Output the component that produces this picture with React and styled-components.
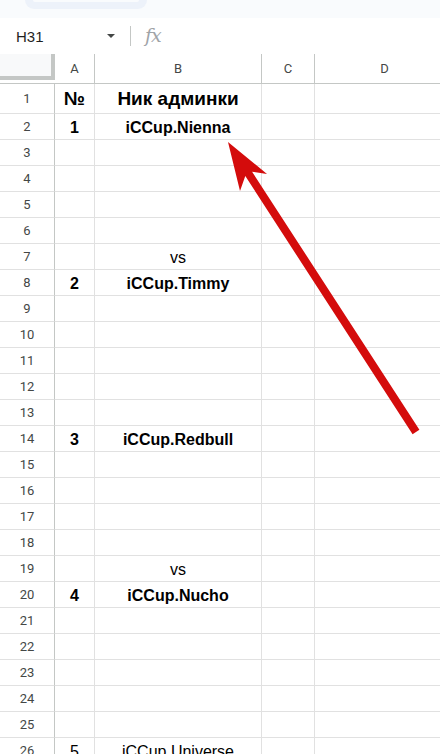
import React from "react";
import styled, { createGlobalStyle } from "styled-components";

const GlobalStyle = createGlobalStyle`
  html, body {
    margin: 0;
    padding: 0;
    background: #ffffff;
    overflow: hidden;
  }
  body {
    font-family: "Liberation Sans", Arial, sans-serif;
  }
`;

const COLS = [55, 40, 167, 53, 140];
const LETTERS = ["A", "B", "C", "D"];

const rows = [
  { a: "№", b: "Ник админки", head: true },
  { a: "1", b: "iCCup.Nienna", bold: true },
  {},
  {},
  {},
  {},
  { b: "vs" },
  { a: "2", b: "iCCup.Timmy", bold: true },
  {},
  {},
  {},
  {},
  {},
  { a: "3", b: "iCCup.Redbull", bold: true },
  {},
  {},
  {},
  {},
  { b: "vs" },
  { a: "4", b: "iCCup.Nucho", bold: true },
  {},
  {},
  {},
  {},
  {},
  { a: "5", b: "iCCup.Universe" },
];

const Page = styled.div`
  position: relative;
  width: 440px;
  height: 754px;
  overflow: hidden;
  background: #ffffff;
`;

const TopStrip = styled.div`
  height: 18px;
  background: #f9fbfd;
  display: flex;
  padding-left: 25px;
`;

const SearchPill = styled.div`
  width: 122px;
  height: 9px;
  background: #edf2fa;
  border-radius: 0 0 10px 10px;
  display: flex;
  justify-content: center;
`;

const SearchInner = styled.div`
  width: 106px;
  height: 2px;
  background: #f9fbfd;
  border-radius: 0 0 6px 6px;
`;

const FormulaBar = styled.div`
  height: 36px;
  display: flex;
  align-items: center;
  background: #ffffff;
`;

const NameBox = styled.div`
  width: 91px;
  padding-left: 16px;
  font-family: "Liberation Sans", Arial, sans-serif;
  font-size: 15px;
  color: #1f1f1f;
`;

const Caret = styled.div`
  width: 0;
  height: 0;
  border-left: 4px solid transparent;
  border-right: 4px solid transparent;
  border-top: 4px solid #444746;
  margin-right: 15px;
`;

const Divider = styled.div`
  width: 1px;
  height: 20px;
  background: #c4c7c5;
  margin-right: 14px;
`;

const Fx = styled.div`
  font-family: "DejaVu Serif", "Liberation Serif", serif;
  font-style: italic;
  font-size: 19px;
  color: #a0a4a8;
  letter-spacing: -1px;
  margin-top: -2px;
`;

const Grid = styled.div`
  display: grid;
  grid-template-columns: ${COLS.map((c) => c + "px").join(" ")};
  grid-auto-rows: 26px;
  grid-template-rows: 30px 30px;
`;

const Corner = styled.div`
  display: flex;
  flex-direction: column;
  border-bottom: 1px solid #c4c7c5;
`;

const CornerFill = styled.div`
  height: 22px;
  background: #f8f9fa;
  border-right: 4px solid #c4c7c5;
  border-bottom: 4px solid #c4c7c5;
`;

const ColHead = styled.div`
  display: flex;
  align-items: center;
  justify-content: center;
  border-right: 1px solid #c4c7c5;
  border-bottom: 1px solid #c4c7c5;
  font-family: Roboto, "Liberation Sans", sans-serif;
  font-size: 13px;
  color: #444746;
`;

const RowHead = styled.div`
  display: flex;
  align-items: center;
  justify-content: center;
  border-right: 1px solid #c4c7c5;
  border-bottom: 1px solid #e1e1e1;
  font-family: Roboto, "Liberation Sans", sans-serif;
  font-size: 13px;
  color: #444746;
`;

const Cell = styled.div`
  display: flex;
  align-items: flex-end;
  justify-content: center;
  padding-bottom: ${(p) => (p.$head ? "3px" : "2px")};
  box-sizing: border-box;
  border-right: 1px solid #e1e1e1;
  border-bottom: 1px solid #e1e1e1;
  font-size: ${(p) => (p.$head ? "19px" : "16px")};
  font-weight: ${(p) => (p.$bold ? 700 : 400)};
  color: #000000;
  white-space: nowrap;
  overflow: visible;
`;

const ArrowLayer = styled.svg`
  position: absolute;
  left: 0;
  top: 0;
  pointer-events: none;
`;

export default function App() {
  return (
    <Page>
      <GlobalStyle />
      <TopStrip>
        <SearchPill>
          <SearchInner />
        </SearchPill>
      </TopStrip>
      <FormulaBar>
        <NameBox>H31</NameBox>
        <Caret />
        <Divider />
        <Fx>fx</Fx>
      </FormulaBar>
      <Grid>
        <Corner>
          <CornerFill />
        </Corner>
        {LETTERS.map((l) => (
          <ColHead key={l}>{l}</ColHead>
        ))}
        {rows.map((r, i) => (
          <React.Fragment key={i}>
            <RowHead>{i + 1}</RowHead>
            <Cell $bold={r.bold || r.head} $head={r.head}>
              {r.a}
            </Cell>
            <Cell $bold={r.bold || r.head} $head={r.head}>
              {r.b}
            </Cell>
            <Cell />
            <Cell />
          </React.Fragment>
        ))}
      </Grid>
      <ArrowLayer width="440" height="754" viewBox="0 0 440 754">
        <polygon
          fill="#d40c0c"
          points="228,142 267,174 252.1,171.7 419.4,429.8 412.6,434.2 245.3,176.1 240,191"
        />
      </ArrowLayer>
    </Page>
  );
}
